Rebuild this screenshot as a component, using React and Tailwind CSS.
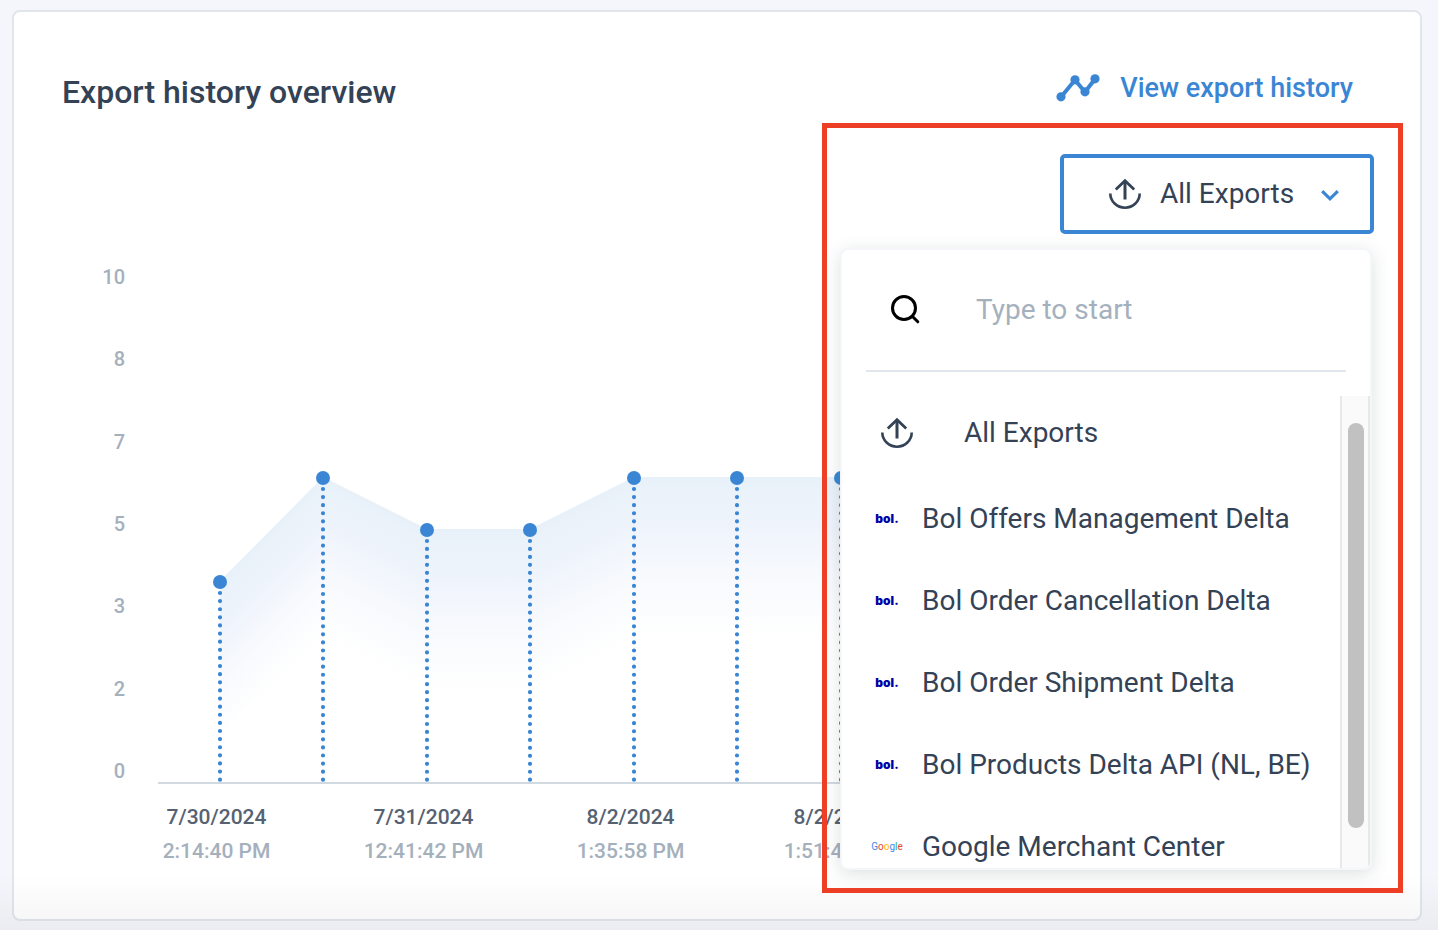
import React from "react";

const points = [
  { x: 62, y: 317 },
  { x: 165, y: 213 },
  { x: 269, y: 265 },
  { x: 372, y: 265 },
  { x: 476, y: 213 },
  { x: 579, y: 213 },
  { x: 683, y: 213 },
];

const yLabels = ["10", "8", "7", "5", "3", "2", "0"];

const xLabels = [
  { date: "7/30/2024", time: "2:14:40 PM" },
  { date: "7/31/2024", time: "12:41:42 PM" },
  { date: "8/2/2024", time: "1:35:58 PM" },
  { date: "8/2/2024", time: "1:51:43 PM" },
];

const FADE_DEPTH = 160;
const DOT_BOTTOM = 514.7;

// Each segment fades at a right angle to its own top edge.
function segmentFade(a, b) {
  const dx = b.x - a.x;
  const dy = b.y - a.y;
  const len = Math.hypot(dx, dy);
  const reach = (FADE_DEPTH * dx) / len;
  return { x1: a.x, y1: a.y, x2: a.x - (dy / len) * reach, y2: a.y + (dx / len) * reach };
}

// Spreads the dots so that a whole number of gaps fits below the point.
function dotGap(y) {
  const span = DOT_BOTTOM - (y + 11);
  return span / Math.round(span / 8);
}

function ExportIcon() {
  return (
    <svg width="34" height="34" viewBox="0 0 34 34" fill="none" stroke="currentColor" aria-hidden="true">
      <path d="M2.3 16.5a14.7 14.2 0 0 0 29.4 0" strokeWidth="2.6" />
      <path d="M17 22.500V4" strokeWidth="3" />
      <path d="M7.800 12.500 17 3.800l9.200 8.700" strokeWidth="2.800" />
    </svg>
  );
}

function TrendIcon() {
  return (
    <svg width="44" height="28" viewBox="0 0 44 28" fill="currentColor" aria-hidden="true">
      <path d="M5 23 19 6l10 12L39 5" fill="none" stroke="currentColor" strokeWidth="4" strokeLinejoin="round" />
      <circle cx="5" cy="22.800" r="4.600" />
      <circle cx="19" cy="5.800" r="4.600" />
      <circle cx="29" cy="17.800" r="4.600" />
      <circle cx="39" cy="4.800" r="4.600" />
    </svg>
  );
}

function BolLogo() {
  return (
    <span aria-hidden="true" className="w-[30px] text-center font-[Inter,sans-serif] text-[12px] leading-4 font-black text-[#0000a4]">
      bol.
    </span>
  );
}

function GoogleLogo() {
  return (
    <svg width="30" height="16" viewBox="0 0 30 16" aria-hidden="true" className="overflow-visible">
      <text x="15" y="11" textAnchor="middle" fontFamily="Roboto, sans-serif" fontSize="10">
        <tspan fill="#4285f4">G</tspan>
        <tspan fill="#ea4335">o</tspan>
        <tspan fill="#fbbc05">o</tspan>
        <tspan fill="#4285f4">g</tspan>
        <tspan fill="#34a853">l</tspan>
        <tspan fill="#ea4335">e</tspan>
      </text>
    </svg>
  );
}

const channels = [
  { name: "Bol Offers Management Delta", Logo: BolLogo },
  { name: "Bol Order Cancellation Delta", Logo: BolLogo },
  { name: "Bol Order Shipment Delta", Logo: BolLogo },
  { name: "Bol Products Delta API (NL, BE)", Logo: BolLogo },
  { name: "Google Merchant Center", Logo: GoogleLogo },
];

function ExportMenu() {
  return (
    <div className="absolute top-full right-[2px] z-20 mt-[14px] w-[532px] overflow-hidden rounded-lg border-2 border-[#f4f6fa] bg-white shadow-[0_4px_18px_rgba(50,70,70,0.16)]">
      <label className="mx-6 flex h-[122px] items-center border-b-2 border-[#e1e5ec] pb-[2px] pl-[23px]">
        <svg width="32" height="32" viewBox="0 0 32 32" fill="none" stroke="#000" strokeWidth="3" strokeLinecap="round" aria-hidden="true">
          <circle cx="15" cy="15" r="11.500" />
          <path d="m23.500 23.500 5.300 5.300" />
        </svg>
        <input
          type="text"
          aria-label="Search exports"
          placeholder="Type to start"
          className="ml-[31px] h-12 min-w-0 flex-1 bg-transparent pl-6 text-[28px] leading-9 outline-none placeholder:text-[#a5b0bd]"
        />
      </label>
      <div className="mt-6 flex h-[472px]">
        <div className="min-w-0 flex-1 overflow-hidden">
          <ul>
            <li>
              <button type="button" className="flex h-[82px] w-full items-center gap-[50px] pb-2 pl-[38px] text-left text-[28px] leading-9">
                <ExportIcon />
                All Exports
              </button>
            </li>
            {channels.map(({ name, Logo }) => (
              <li key={name}>
                <button type="button" className="flex h-[82px] w-full items-center gap-5 pl-[30px] text-left text-[28px] leading-9 whitespace-nowrap">
                  <Logo />
                  {name}
                </button>
              </li>
            ))}
          </ul>
        </div>
        <div className="w-[30px] border-x-2 border-[#e8e8e8] bg-[#fafafa] px-[6px] pt-[27px]">
          <div className="h-[405px] w-4 rounded-full bg-[#c1c1c1]" />
        </div>
      </div>
    </div>
  );
}

function HistoryChart() {
  return (
    <svg width="1190" height="519" viewBox="0 0 1190 519" role="img" aria-label="Exports over time" className="block max-w-none">
      <defs>
        {points.slice(1).map((p, i) => (
          <linearGradient key={i} id={`fade-${i}`} gradientUnits="userSpaceOnUse" {...segmentFade(points[i], p)}>
            <stop offset="0" stopColor="#e8f1f9" />
            <stop offset="0.3" stopColor="#eff4fc" />
            <stop offset="0.65" stopColor="#f8fafd" />
            <stop offset="1" stopColor="#ffffff" />
          </linearGradient>
        ))}
      </defs>
      {points.slice(1).map((p, i) => (
        <polygon key={i} fill={`url(#fade-${i})`} points={`${points[i].x},${points[i].y - 1} ${p.x},${p.y - 1} ${p.x},517 ${points[i].x},517`} />
      ))}
      <path d="M0 518H1190" stroke="#d2d9e1" strokeWidth="2" />
      {points.map((p) => (
        <g key={p.x}>
          <path
            d={`M${p.x} ${DOT_BOTTOM}V${p.y + 10}`}
            stroke="#3a86d4"
            strokeWidth="4.200"
            strokeLinecap="round"
            strokeDasharray={`0 ${dotGap(p.y)}`}
          />
          <circle cx={p.x} cy={p.y} r="7" fill="#3a86d4" />
        </g>
      ))}
    </svg>
  );
}

export default function App() {
  return (
    <div className="relative flex min-h-screen flex-col bg-[#f4f6fb] pt-[10px] pr-4 pb-[9px] pl-3 font-[Roboto,sans-serif] text-[#344256]">
      <main className="flex-1 rounded-lg border-2 border-[#e1e5ec] bg-white pt-[60px]">
        <header className="flex items-start justify-between pr-[67px] pl-12">
          <h1 className="text-[32px] leading-10 font-medium">Export history overview</h1>
          <a href="#history" className="flex items-center gap-5 text-[27px] leading-8 font-medium text-[#3a86d4]">
            <TrendIcon />
            View export history
          </a>
        </header>

        <div className="mt-[42px] flex justify-end pr-[46px]">
          <div className="relative">
            <button type="button" aria-expanded="true" className="flex h-20 w-[314px] items-center rounded-[5px] border-4 border-[#3a86d4] bg-white pl-11 text-[28px] leading-9">
              <ExportIcon />
              <span className="ml-[18px]">All Exports</span>
              <svg width="20" height="16" viewBox="0 0 20 16" fill="none" stroke="#3a86d4" strokeWidth="3.200" className="mr-[30px] ml-auto" aria-hidden="true">
                <path d="m2.200 5.200 7.800 7.600 7.800-7.600" />
              </svg>
            </button>
            <div className="pointer-events-none absolute -top-[31px] -right-[29px] z-30 h-[770px] w-[581px] border-[5px] border-[#ec3f25]" />
            <ExportMenu />
          </div>
        </div>

        <section className="mt-[31px]">
          <div className="flex gap-[33px]">
            <div className="flex h-[518px] w-[111px] shrink-0 flex-col justify-between text-right text-xl leading-6 font-medium text-[#a5b0bd]">
              {yLabels.map((label) => (
                <span key={label}>{label}</span>
              ))}
            </div>
            <div className="min-w-0 flex-1 overflow-hidden">
              <HistoryChart />
            </div>
          </div>
          <div className="mt-4 flex pl-[99px] text-center text-[21px] leading-[34px] font-medium">
            {xLabels.map(({ date, time }) => (
              <div key={time} className="w-[207px]">
                <div className="text-[#566272]">{date}</div>
                <div className="text-[#a5b0bd]">{time}</div>
              </div>
            ))}
          </div>
        </section>
      </main>
      <div className="pointer-events-none absolute inset-x-0 bottom-0 z-10 h-14 bg-linear-to-b from-transparent to-black/4" />
    </div>
  );
}
